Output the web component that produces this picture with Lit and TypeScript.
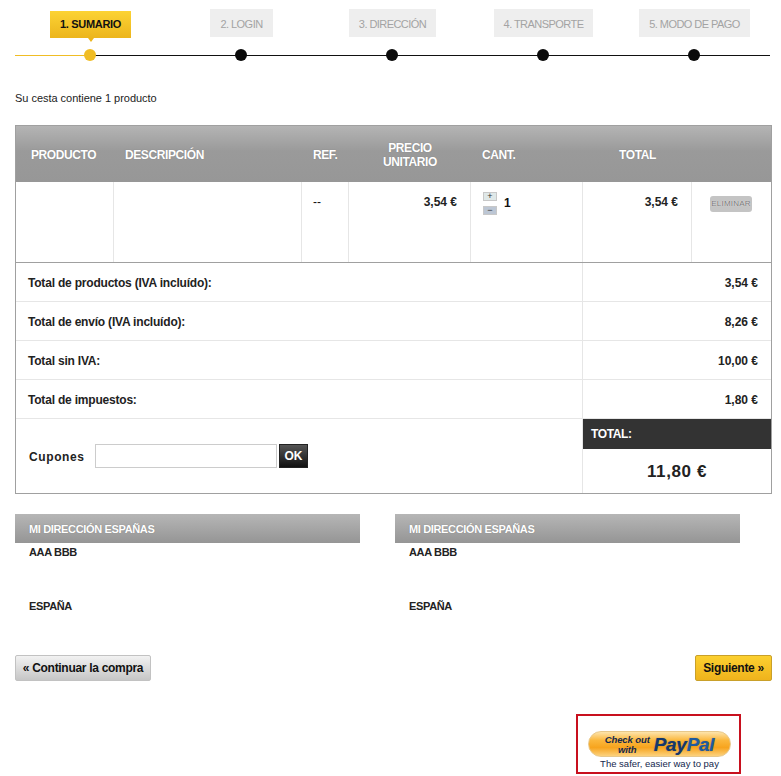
import { LitElement, html, css } from "lit";
import { customElement } from "lit/decorators.js";

const steps = ["1. SUMARIO", "2. LOGIN", "3. DIRECCIÓN", "4. TRANSPORTE", "5. MODO DE PAGO"];
const totals: [string, string][] = [
  ["Total de productos (IVA incluído):", "3,54 €"],
  ["Total de envío (IVA incluído):", "8,26 €"],
  ["Total sin IVA:", "10,00 €"],
  ["Total de impuestos:", "1,80 €"],
];

@customElement("app-root")
export class AppRoot extends LitElement {
  static styles = css`
    :host { display: block; width: 781px; height: 776px; overflow: hidden; background: #fff; color: #111; font-family: "Liberation Sans", Arial, sans-serif; font-size: 12px; }
    * { box-sizing: border-box; }
    .page { padding: 0 9px 0 15px; display: flex; flex-direction: column; }

    .steps { display: grid; grid-template-columns: repeat(5, 151px); height: 62px; width: 755px; }
    .step { position: relative; display: flex; flex-direction: column; align-items: center; padding-top: 9px; }
    .step::before { content: ""; position: absolute; left: 0; right: 0; top: 55px; height: 1px; background: #111; }
    .step.active::before { background: linear-gradient(90deg, #f0bd25 50%, #111 50%); }
    .label { height: 28px; padding: 0 10px; background: #eee; color: #a3a3a3; font-size: 11px; line-height: 30px; white-space: nowrap; letter-spacing: -0.55px; }
    .step.active .label { position: relative; margin-top: 2px; height: 27px; line-height: 27px; color: #111; font-weight: 700; background: linear-gradient(#fcd334, #ecb51c); letter-spacing: -0.3px; }
    .step.active .label::after { content: ""; position: absolute; left: 50%; bottom: -4px; margin-left: -3px; border: 3px solid transparent; border-top: 4px solid #ecb51c; border-bottom: 0; }
    .dot { position: absolute; top: 49px; left: 50%; margin-left: -7px; width: 12px; height: 12px; border-radius: 50%; background: #0a0a0a; }
    .step.active .dot { background: #f0bd25; }

    .intro { margin-top: 29px; height: 14px; line-height: 14px; font-size: 11px; color: #222; letter-spacing: -0.03px; }

    .cart { margin-top: 20px; width: 757px; border: 1px solid #a0a0a0; display: flex; flex-direction: column; }
    .cols { display: grid; grid-template-columns: 98px 188px 47px 122px 112px 109px 79px; }
    .head { height: 56px; background: linear-gradient(#b4b4b4, #9a9a9a 45%, #979797); color: #fff; font-weight: 700; font-size: 12px; align-items: center; text-shadow: 0 0 1px #777; letter-spacing: -0.4px; padding-top: 2px; }
    .head div { text-align: center; line-height: 14px; }
    .head .start { text-align: left; padding-left: 11px; }
    .head .h0 { padding-left: 15px; text-align: left; }
    .item { height: 81px; border-bottom: 1px solid #a0a0a0; }
    .item > div { border-right: 1px solid #e6e6e6; padding-top: 13px; font-weight: 700; line-height: 14px; }
    .item > div:last-child { border-right: 0; }
    .ref { padding-left: 11px; font-weight: 400 !important; }
    .price { text-align: right; padding-right: 13px; color: #222; }
    .qty { display: flex; gap: 7px; padding-left: 12px; padding-top: 10px !important; }
    .qbtns { display: flex; flex-direction: column; gap: 5px; }
    .qbtn { width: 14px; height: 9px; border: 1px solid #c8c8c8; color: #333; font-size: 9px; line-height: 6px; text-align: center; font-weight: 400; }
    .qbtn.plus { background: #dfe8e8; }
    .qbtn.minus { background: #bcc6d4; }
    .qval { padding-top: 4px; font-size: 12px; }
    .del { padding-top: 14px !important; padding-left: 18px; }
    .delbtn { width: 42px; height: 16px; border-radius: 3px; background: #c4c4c4; color: #777; font-size: 8px; line-height: 16px; text-align: center; font-weight: 400; letter-spacing: 0.2px; text-shadow: 0 0 1px #fff; }

    .row { display: grid; grid-template-columns: 566px 189px; height: 39px; border-bottom: 1px solid #e6e6e6; font-weight: 700; color: #222; align-items: stretch; }
    .row > div { display: flex; align-items: center; padding-top: 1px; }
    .row .t { padding-left: 12px; letter-spacing: -0.2px; }
    .row .v { justify-content: flex-end; padding-right: 13px; border-left: 1px solid #e6e6e6; }

    .foot { display: grid; grid-template-columns: 566px 189px; height: 74px; }
    .coupon { display: flex; align-items: center; padding: 0 0 0 13px; }
    .coupon label { width: 66px; padding-top: 1px; font-weight: 700; font-size: 12px; letter-spacing: 0.6px; color: #222; }
    .coupon input { width: 182px; height: 24px; border: 1px solid #ccc; padding: 0; background: #fff; margin: 0; }
    .ok { margin-left: 2px; width: 29px; height: 24px; background: linear-gradient(#555, #111); border: 1px solid #222; color: #fff; font: 700 12px "Liberation Sans", Arial, sans-serif; padding: 0; }
    .grand { border-left: 1px solid #e6e6e6; display: flex; flex-direction: column; }
    .gl { height: 30px; background: #333; color: #fff; font-weight: 700; padding-left: 8px; line-height: 31px; letter-spacing: -0.4px; }
    .gv { flex: 1; display: flex; align-items: center; justify-content: center; font-size: 17px; font-weight: 700; color: #222; letter-spacing: 0.6px; padding-top: 2px; }

    .addrs { margin-top: 20px; display: flex; gap: 35px; height: 112px; }
    .addr { width: 345px; font-weight: 700; color: #222; font-size: 11px; letter-spacing: -0.35px; }
    .addr h3 { margin: 0; height: 29px; padding-left: 14px; background: linear-gradient(#b6b6b6, #959595); color: #fff; font-size: 11px; line-height: 30px; font-weight: 700; letter-spacing: -0.35px; text-shadow: 0 0 1px #777; }
    .addr p { margin: 0; padding-left: 14px; line-height: 14px; }
    .addr .n { margin-top: 2px; }
    .addr .c { margin-top: 40px; }

    .nav { margin-top: 29px; display: flex; justify-content: space-between; width: 757px; height: 26px; }
    .btn { height: 26px; border-radius: 2px; font: 700 12px "Liberation Sans", Arial, sans-serif; color: #111; padding: 0; letter-spacing: -0.3px; }
    .back { width: 136px; background: linear-gradient(#f2f2f2, #c6c6c6); border: 1px solid #c2c2c2; }
    .next { width: 77px; background: linear-gradient(#fcd030, #efb31c); border: 1px solid #c9a02a; }

    .pp-row { margin-top: 33px; padding-left: 561px; }
    .pp { width: 165px; height: 60px; border: 2px solid #c8101e; display: flex; flex-direction: column; align-items: center; padding-top: 15px; }
    .pill { width: 143px; height: 26px; margin-left: 2px; border-radius: 13px; border: 1px solid #e8c88a; background: linear-gradient(#fde4ac 0%, #fbb73c 35%, #f7a41e 65%, #fcd27e 100%); display: flex; align-items: center; justify-content: center; gap: 4px; padding-top: 1px; }
    .co { font-style: italic; font-weight: 700; font-size: 9.5px; line-height: 10px; color: #14284d; text-align: center; letter-spacing: -0.1px; }
    .logo { font-style: italic; font-weight: 700; font-size: 19px; line-height: 20px; letter-spacing: -0.3px; color: #14376c; text-shadow: 0 0 1px rgba(20, 55, 108, 0.6); }
    .logo span { color: #1f5a9e; }
    .tag { margin-top: 1px; margin-left: 2px; font-size: 9.5px; line-height: 12px; color: #14284d; white-space: nowrap; }
  `;

  render() {
    return html`
      <div class="page">
        <div class="steps">
          ${steps.map((s, i) => html`<div class="step ${i === 0 ? "active" : ""}"><div class="label">${s}</div><div class="dot"></div></div>`)}
        </div>
        <div class="intro">Su cesta contiene 1 producto</div>
        <div class="cart">
          <div class="cols head">
            <div class="h0">PRODUCTO</div>
            <div class="start">DESCRIPCIÓN</div>
            <div class="start">REF.</div>
            <div>PRECIO<br />UNITARIO</div>
            <div class="start">CANT.</div>
            <div>TOTAL</div>
            <div></div>
          </div>
          <div class="cols item">
            <div></div>
            <div></div>
            <div class="ref">--</div>
            <div class="price">3,54 €</div>
            <div class="qty">
              <div class="qbtns"><div class="qbtn plus">+</div><div class="qbtn minus">−</div></div>
              <div class="qval">1</div>
            </div>
            <div class="price">3,54 €</div>
            <div class="del"><div class="delbtn">ELIMINAR</div></div>
          </div>
          ${totals.map(([t, v]) => html`<div class="row"><div class="t">${t}</div><div class="v">${v}</div></div>`)}
          <div class="foot">
            <div class="coupon"><label>Cupones</label><input type="text" /><button class="ok">OK</button></div>
            <div class="grand"><div class="gl">TOTAL:</div><div class="gv">11,80 €</div></div>
          </div>
        </div>
        <div class="addrs">
          ${[0, 1].map(() => html`<div class="addr"><h3>MI DIRECCIÓN ESPAÑAS</h3><p class="n">AAA BBB</p><p class="c">ESPAÑA</p></div>`)}
        </div>
        <div class="nav">
          <button class="btn back">« Continuar la compra</button>
          <button class="btn next">Siguiente »</button>
        </div>
        <div class="pp-row">
          <div class="pp">
            <div class="pill">
              <div class="co">Check out<br />with</div>
              <div class="logo">Pay<span>Pal</span></div>
            </div>
            <div class="tag">The safer, easier way to pay</div>
          </div>
        </div>
      </div>
    `;
  }
}
